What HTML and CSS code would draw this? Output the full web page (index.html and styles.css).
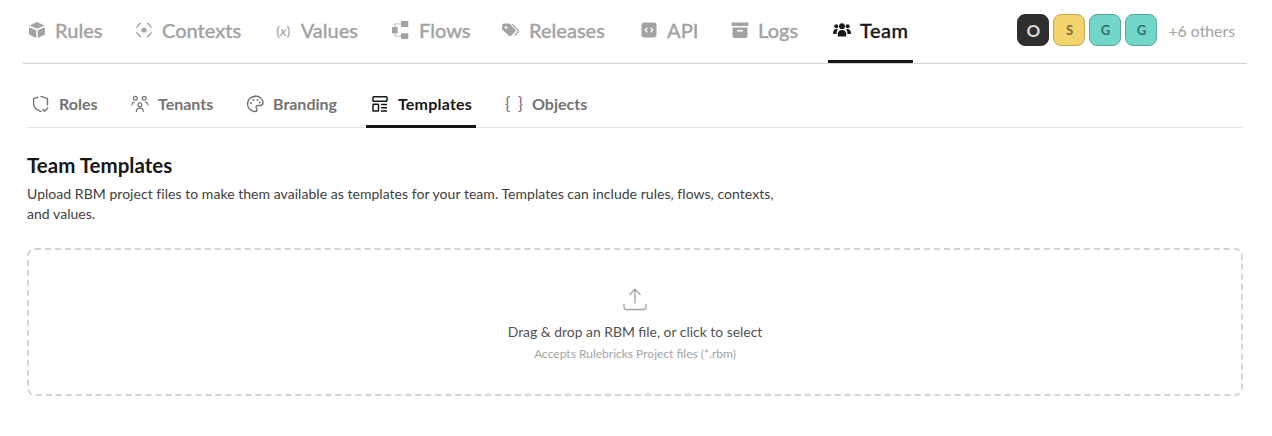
FILE: index.html
```html
<!DOCTYPE html>
<html lang="en">
<head>
    <meta charset="UTF-8">
    <title>Team Templates</title>
    <link rel="stylesheet" href="styles.css">
</head>
<body>
    <nav class="main-nav">
        <a class="main-tab tab-rules">
            <svg class="main-icon" viewBox="0 0 18 18"><path d="M9 1 16.500 4.600 9 7.800 1.500 4.600Z" fill="currentColor"/><path d="M1 6.200 8.200 9.300V17L1 13.400Z M17 6.200 9.800 9.300V17L17 13.400Z" fill="currentColor"/></svg>
            Rules
        </a>
        <a class="main-tab tab-contexts">
            <svg class="main-icon" viewBox="0 0 18 18" fill="none" stroke="currentColor" stroke-width="1.400" stroke-linecap="round"><circle cx="9" cy="9" r="2.600" fill="currentColor" stroke="none"/><path d="M2 6.500A7.500 7.500 0 0 1 5.500 2.400M12.500 2.400A7.500 7.500 0 0 1 16 6.500M16 11.500A7.500 7.500 0 0 1 12.500 15.600M5.500 15.600A7.500 7.500 0 0 1 2 11.500"/></svg>
            Contexts
        </a>
        <a class="main-tab tab-values">
            <span class="var-icon">(<i>x</i>)</span>
            Values
        </a>
        <a class="main-tab tab-flows">
            <svg class="main-icon" viewBox="0 0 18 18" fill="currentColor"><path d="M3 6V2.800H9M3 12v3.200H9" fill="none" stroke="currentColor" stroke-width="1.300" opacity=".6"/><rect x="0" y="6" width="5.700" height="6.300"/><rect x="9" y="0" width="7.300" height="6"/><rect x="9" y="12.300" width="7.300" height="6"/></svg>
            Flows
        </a>
        <a class="main-tab tab-releases">
            <svg class="main-icon" viewBox="0 0 18 18" fill="currentColor"><path fill-rule="evenodd" d="M0 4.500C0 3.400.9 2.500 2 2.500h4.600c.5 0 1 .2 1.400.6l5 5c.8.800.8 2 0 2.800l-3.600 3.600c-.8.800-2 .8-2.800 0L.7 9C.2 8.700 0 8.200 0 7.700zM4 5.300a1.300 1.300 0 1 0 .01 0z"/><path d="M10.300 2.600 16 8.300c1.300 1.300 1.300 2.300 0 3.600l-3 3-.9-.7 3-3.100c.7-.8.700-1.300 0-2L9.400 3z"/></svg>
            Releases
        </a>
        <a class="main-tab tab-api">
            <svg class="main-icon" viewBox="0 0 18 18"><rect x="1.500" y="1.500" width="15" height="15" rx="3" fill="currentColor"/><path d="M7.300 6.800 5.300 9l2 2.200M10.700 6.800 12.700 9l-2 2.200" fill="none" stroke="#fff" stroke-width="1.300"/></svg>
            API
        </a>
        <a class="main-tab tab-logs">
            <svg class="main-icon" viewBox="0 0 18 18" fill="currentColor"><rect x="0.500" y="1.500" width="17" height="3.500" rx="1"/><path d="M1.500 6.500h15V15c0 1.100-.9 2-2 2h-11c-1.100 0-2-.9-2-2zM6 9v1.500h6V9z" fill-rule="evenodd"/></svg>
            Logs
        </a>
        <a class="main-tab tab-team active">
            <svg class="main-icon" viewBox="0 0 18 18" fill="currentColor"><circle cx="9" cy="5.200" r="2.900"/><circle cx="3.300" cy="5.200" r="2"/><circle cx="14.700" cy="5.200" r="2"/><path d="M4.800 15.500v-2.800c0-2 1.800-3.700 4.200-3.700s4.200 1.700 4.200 3.700v2.800z"/><path d="M0 12.300C0 9.800 1.500 8 3.300 8c.7 0 1.200.2 1.600.5-.8.800-1.300 2.100-1.300 3.500v1H1c-.6 0-1-.2-1-.7zM18 12.300C18 9.800 16.500 8 14.700 8c-.7 0-1.200.2-1.600.5.8.800 1.300 2.100 1.300 3.500v1H17c.6 0 1-.2 1-.7z"/></svg>
            Team
        </a>
        <div class="presence">
            <span class="avatar avatar-dark">O</span>
            <span class="avatar avatar-yellow">S</span>
            <span class="avatar avatar-teal">G</span>
            <span class="avatar avatar-teal">G</span>
            <span class="others">+6 others</span>
        </div>
    </nav>

    <div class="content">
        <nav class="sub-nav">
            <a class="sub-tab tab-roles">
                <svg class="sub-icon" viewBox="0 0 18 18" fill="none" stroke="currentColor" stroke-width="1.400" stroke-linecap="round" stroke-linejoin="round"><path d="M9 1.400 15.500 3.700V10M8.800 16.500C5 15 1.600 13 1.600 9V3.700L6 2.200M10.800 14.500l1.700 1.700 3.300-3.300"/></svg>
                Roles
            </a>
            <a class="sub-tab tab-tenants">
                <svg class="sub-icon" viewBox="0 0 18 18" fill="none" stroke="currentColor" stroke-width="1.200" stroke-linecap="round"><circle cx="4.300" cy="3.300" r="1.900"/><circle cx="13.200" cy="3.300" r="1.900"/><circle cx="8.800" cy="9.800" r="1.900"/><path d="M5.300 16.500c0-2 1.500-3.300 3.500-3.300s3.500 1.300 3.500 3.300M.8 10c.2-1.300 1.200-2.500 2.500-2.800M17 10c-.2-1.300-1.200-2.500-2.500-2.800"/></svg>
                Tenants
            </a>
            <a class="sub-tab tab-branding">
                <svg class="sub-icon" viewBox="0 0 18 18" fill="none" stroke="currentColor" stroke-width="1.400"><path d="M9 1.500C4.800 1.500 1.500 4.800 1.500 9s3.300 7.500 7.500 7.500c1.300 0 2-.8 2-1.800 0-1.300-1-1.500-1-2.700 0-1 .8-1.500 1.800-1.500h2.200c1.700 0 3-1.300 3-3 0-3.500-3.500-6.500-8-6.500z"/><circle cx="5" cy="8" r="1" fill="currentColor" stroke="none"/><circle cx="7.500" cy="5" r="1" fill="currentColor" stroke="none"/><circle cx="11.500" cy="5" r="1" fill="currentColor" stroke="none"/><circle cx="13.800" cy="7.500" r="1" fill="currentColor" stroke="none"/></svg>
                Branding
            </a>
            <a class="sub-tab tab-templates active">
                <svg class="sub-icon" viewBox="0 0 18 18" fill="none" stroke="currentColor" stroke-width="1.500"><rect x="2" y="1.800" width="14" height="4.400" rx=".8"/><rect x="2" y="9.200" width="5.500" height="6.800" rx=".6"/><path d="M10 9.500h6M10 12.700h6M10 15.900h6"/></svg>
                Templates
            </a>
            <a class="sub-tab tab-objects">
                <span class="brace-icon">{ }</span>
                Objects
            </a>
        </nav>

        <h2 class="section-title">Team Templates</h2>
        <p class="section-text">Upload RBM project files to make them available as templates for your team. Templates can include rules, flows, contexts, and values.</p>

        <div class="dropzone">
            <svg class="upload-icon" viewBox="0 0 24 24" fill="none" stroke="currentColor" stroke-width="1.300" stroke-linecap="round" stroke-linejoin="round"><path d="M12 16V2.500M6.800 7.500 12 2.300l5.200 5.200M1 17.500v2.700c0 1.300 1 2.300 2.300 2.300h17.400c1.300 0 2.300-1 2.300-2.300v-2.700"/></svg>
            <p class="drop-title">Drag &amp; drop an RBM file, or click to select</p>
            <p class="drop-hint">Accepts Rulebricks Project files (*.rbm)</p>
        </div>
    </div>
</body>
</html>
```
FILE: styles.css
```css
* {
    box-sizing: border-box;
}
body {
    font-family: 'Lato', 'Noto Sans', sans-serif;
    margin: 0;
    background-color: white;
    color: #1a1a1a;
}
p, h2 {
    margin: 0;
}
.main-nav {
    display: flex;
    align-items: stretch;
    height: 64px;
    margin: 0 25px 0 23px;
    border-bottom: 1px solid #d4d4d4;
}
.main-tab {
    display: flex;
    align-items: center;
    gap: 9px;
    height: 63px;
    padding: 0 5px;
    font-size: 20px;
    font-weight: 500;
    color: #a3a3a3;
    -webkit-text-stroke: 0.3px;
    border-bottom: 3px solid transparent;
    white-space: nowrap;
}
.main-tab.active {
    color: #171717;
    border-bottom-color: #171717;
    letter-spacing: 0.5px;
}
.main-icon {
    width: 18px;
    height: 18px;
    flex: none;
}
.var-icon {
    width: 18px;
    font-size: 14px;
    -webkit-text-stroke: 0;
    text-align: center;
    white-space: nowrap;
}
.tab-rules { width: 83px; margin-right: 24px; }
.tab-contexts { width: 116px; margin-right: 24px; }
.tab-values { width: 93px; margin-right: 24px; }
.tab-flows { width: 86px; margin-right: 24px; }
.tab-releases { width: 114px; margin-right: 24px; }
.tab-api { width: 67px; margin-right: 24px; }
.tab-logs { width: 78px; margin-right: 24px; }
.tab-team { width: 85px; }
.presence {
    display: flex;
    align-items: center;
    gap: 4px;
    margin-left: auto;
    padding-right: 12px;
    padding-bottom: 3px;
}
.avatar {
    display: flex;
    align-items: center;
    justify-content: center;
    width: 32px;
    height: 32px;
    border-radius: 8px;
    border: 1px solid;
    font-size: 13px;
    font-weight: 700;
}
.avatar-dark {
    background-color: #2e2e2e;
    border-color: #2e2e2e;
    color: #d8d8d8;
    font-size: 17px;
}
.avatar-yellow {
    background-color: #f3d36b;
    border-color: #c4a850;
    color: #7a6a34;
}
.avatar-teal {
    background-color: #72d6c9;
    border-color: #58a89e;
    color: #37706a;
}
.others {
    margin-left: 7px;
    font-size: 15.8px;
    color: #a3a3a3;
}
.content {
    margin: 0 29px 0 27px;
}
.sub-nav {
    display: flex;
    height: 64px;
    border-bottom: 1px solid #e5e5e5;
}
.sub-tab {
    display: flex;
    align-items: center;
    gap: 9px;
    height: 64px;
    padding: 18px 5px 0;
    font-size: 16px;
    font-weight: 700;
    color: #737373;
    border-bottom: 3px solid transparent;
    white-space: nowrap;
}
.sub-tab.active {
    color: #171717;
    border-bottom-color: #171717;
    letter-spacing: 0.2px;
}
.sub-icon {
    width: 18px;
    height: 18px;
    flex: none;
}
.brace-icon {
    width: 18px;
    font-size: 17px;
    font-weight: 400;
    word-spacing: 3px;
    text-align: center;
    white-space: nowrap;
}
.tab-roles { width: 74px; margin-right: 25px; }
.tab-tenants { width: 90px; margin-right: 25px; }
.tab-branding { width: 100px; margin-right: 25px; }
.tab-templates { width: 110px; margin-right: 24px; }
.section-title {
    margin-top: 25px;
    font-size: 20.5px;
    line-height: 24px;
    font-weight: 700;
    color: #171717;
}
.section-text {
    max-width: 760px;
    margin-top: 7px;
    font-size: 14px;
    line-height: 20px;
    letter-spacing: 0.04px;
    color: #404040;
}
.dropzone {
    display: flex;
    flex-direction: column;
    align-items: center;
    height: 148px;
    margin-top: 24px;
    padding-top: 37px;
    border: 2px dashed #d4d4d4;
    border-radius: 8px;
}
.upload-icon {
    width: 24px;
    height: 24px;
    color: #a3a3a3;
}
.drop-title {
    margin-top: 11px;
    font-size: 13.9px;
    line-height: 20px;
    color: #525252;
}
.drop-hint {
    margin-top: 4px;
    font-size: 12px;
    line-height: 16px;
    color: #a3a3a3;
}
```
